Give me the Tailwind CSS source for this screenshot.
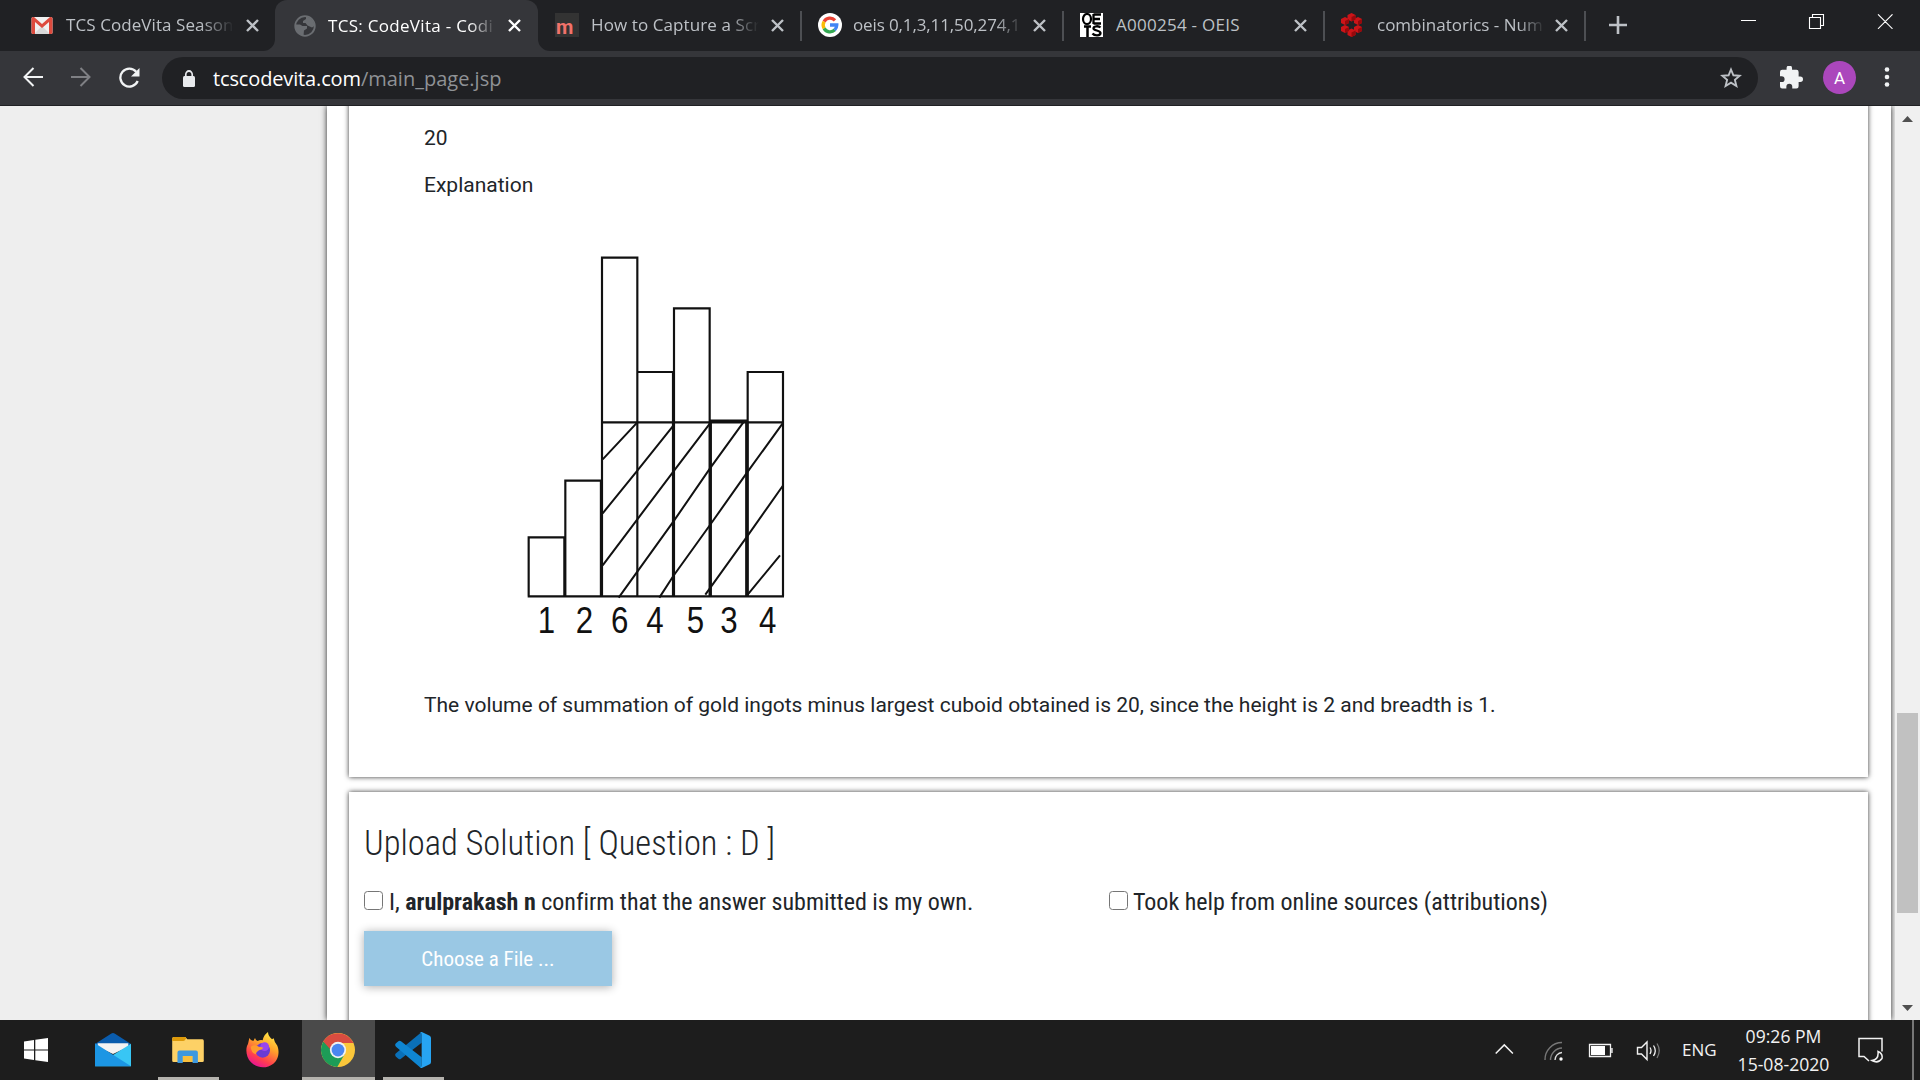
<!DOCTYPE html>
<html lang="en">
<head>
<meta charset="utf-8">
<title>TCS: CodeVita - Coding Contest</title>
<script src="https://cdn.jsdelivr.net/npm/@tailwindcss/browser@4"></script>
</head>
<body class="w-[1920px] h-[1080px] overflow-hidden flex flex-col bg-white font-['Open_Sans',sans-serif]">
<svg class="hidden">
  <symbol id="x" viewBox="0 0 13 13"><path d="M1 1l11 11M12 1L1 12" stroke="currentColor" stroke-width="2.4" fill="none"/></symbol>
</svg>

<!-- Tab strip -->
<header class="h-[51px] shrink-0 bg-[#202124] flex pl-[14px] text-[17px] text-[#bdc1c6]">
  <div class="w-[261px] h-[50px] pl-[17px] flex items-center">
    <svg class="w-6 h-6 shrink-0" viewBox="0 0 24 24"><rect x=".5" y="4" width="21" height="17" rx="1.5" fill="#f1f1f1"/><path d="M3 21l8-8 8 8z" fill="#d9d9d9"/><path d="M.5 5.500v14A1.500 1.500 0 0 0 2 21h2V9l7 6 7-6v12h2a1.500 1.500 0 0 0 1.500-1.500v-14A1.500 1.500 0 0 0 20 4h-1l-8 7-8-7H2A1.500 1.500 0 0 0 .5 5.500z" fill="#dd4b3e"/></svg>
    <div class="ml-[11px] w-[168px] shrink-0 overflow-hidden whitespace-nowrap tracking-[0.08px] mask-r-from-80% mask-r-to-100%">TCS CodeVita Season</div>
    <svg class="ml-[12px] w-[13px] h-[13px]"><use href="#x"/></svg>
  </div>
  <div class="relative w-[263px] h-[51px] pl-[19px] rounded-t-[12px] bg-[#35363a] text-white flex items-center">
    <svg class="absolute -left-3 bottom-0 w-3 h-3" viewBox="0 0 12 12"><path d="M12 0v12H0A12 12 0 0 0 12 0z" fill="#35363a"/></svg>
    <svg class="absolute -right-3 bottom-0 w-3 h-3" viewBox="0 0 12 12"><path d="M0 0v12h12A12 12 0 0 1 0 0z" fill="#35363a"/></svg>
    <svg class="w-[22px] h-[22px] shrink-0" viewBox="0 0 22 22"><circle cx="11" cy="11" r="9.800" fill="none" stroke="#6a6d71" stroke-width="1.800"/><path d="M1.500 9.500h4.500l2.500 1.500h4.500v2.500l-3 2-.5 5C5 20.500 1.500 16 1.500 11zM12 1.500c5 1 8.500 5 8.500 9.500l-2.500 1.500-4.500-2-2-2.500H9V6l3-2z" fill="#6a6d71"/></svg>
    <div class="ml-[12px] w-[168px] shrink-0 overflow-hidden whitespace-nowrap tracking-[0.3px] mask-r-from-84% mask-r-to-100%">TCS: CodeVita - Codi</div>
    <svg class="ml-[12px] w-[13px] h-[13px]"><use href="#x"/></svg>
  </div>
  <div class="w-[262px] h-[50px] pl-[17px] flex items-center">
    <div class="w-6 h-6 shrink-0 bg-[#333] text-[#f2726a] font-['Roboto'] font-bold text-[20px] leading-[28px] pl-px">m</div>
    <div class="ml-[12px] w-[168px] shrink-0 overflow-hidden whitespace-nowrap tracking-[0.1px] mask-r-from-82% mask-r-to-100%">How to Capture a Scr</div>
    <svg class="ml-[12px] w-[13px] h-[13px]"><use href="#x"/></svg>
  </div>
  <div class="relative w-[262px] h-[50px] pl-[18px] flex items-center">
    <div class="absolute left-0 top-[11px] w-[2px] h-[30px] bg-[#4d4f53]"></div>
    <svg class="w-6 h-6 shrink-0" viewBox="0 0 24 24"><circle cx="12" cy="12" r="12" fill="#fff"/><g fill="none" stroke-width="3.300"><path d="M6.100 8.600A6.800 6.800 0 0 1 17 7.300" stroke="#ea4335"/><path d="M6.100 15.400a6.800 6.800 0 0 1 0-6.800" stroke="#fbbc05"/><path d="M16.800 16.900A6.800 6.800 0 0 1 6.100 15.400" stroke="#34a853"/><path d="M12 12h6.800a6.800 6.800 0 0 1-2.200 5" stroke="#4285f4"/></g></svg>
    <div class="ml-[11px] w-[170px] shrink-0 overflow-hidden whitespace-nowrap tracking-[-0.12px] mask-r-from-84% mask-r-to-100%">oeis 0,1,3,11,50,274,1</div>
    <svg class="ml-[10px] w-[13px] h-[13px]"><use href="#x"/></svg>
  </div>
  <div class="relative w-[261px] h-[50px] pl-[18px] flex items-center">
    <div class="absolute left-0 top-[11px] w-[2px] h-[30px] bg-[#4d4f53]"></div>
    <svg class="w-[23px] h-6 shrink-0" viewBox="0 0 23 24" fill="none" stroke="#000"><path d="M0 0h23v24H0z" fill="#fff" stroke="none"/><ellipse cx="7" cy="6" rx="4" ry="5" stroke-width="2.200"/><path d="M13.500 1v10M13.500 1.500H21M13.500 6H20M13.500 10.500H21" stroke-width="2.300"/><path d="M4 13.500h7M7.500 13v11" stroke-width="2.500"/><path d="M20.500 14.500c-2-2-7-1.500-7 1s7 1.500 7 4.500-6 3-8 .5" stroke-width="2.300"/></svg>
    <div class="ml-[13px] w-[167px] shrink-0 overflow-hidden whitespace-nowrap tracking-[0.26px]">A000254 - OEIS</div>
    <svg class="ml-[11px] w-[13px] h-[13px]"><use href="#x"/></svg>
  </div>
  <div class="relative w-[260px] h-[50px] pl-[18px] flex items-center">
    <div class="absolute left-0 top-[11px] w-[2px] h-[30px] bg-[#4d4f53]"></div>
    <svg class="w-[21px] h-6 shrink-0" viewBox="0 0 21 24"><g fill="#cc1418"><path d="M10.500 0l4 2v4.500l-4 2-4-2V2z"/><path d="M4 4l4 2v4l-4 2-4-2V6z"/><path d="M17 4l4 2v4l-4 2-4-2V6z"/><path d="M4 12l4 2v4l-4 2-4-2v-4z"/><path d="M17 12l4 2v4l-4 2-4-2v-4z"/><path d="M10.500 15.500l4 2V22l-4 2-4-2v-4.500z"/></g><path d="M10.500 4l4-2v4.500l-4 2zM4 8l4-2v4l-4 2zM17 8l4-2v4l-4 2zM4 16l4-2v4l-4 2zM17 16l4-2v4l-4 2zM10.500 19.500l4-2V22l-4 2z" fill="#96090c"/></svg>
    <div class="ml-[15px] w-[168px] shrink-0 overflow-hidden whitespace-nowrap mask-r-from-84% mask-r-to-100%">combinatorics - Num</div>
    <svg class="ml-[10px] w-[13px] h-[13px]"><use href="#x"/></svg>
  </div>
  <div class="mt-[11px] ml-px w-[2px] h-[30px] bg-[#4d4f53]"></div>
  <svg class="ml-[23px] mt-[16px] w-[18px] h-[18px]" viewBox="0 0 18 18"><path d="M9 0v18M0 9h18" stroke="#bdc1c6" stroke-width="2.600"/></svg>
  <svg class="ml-auto mr-[27px] mt-[14px] w-[152px] h-[15px]" viewBox="0 0 152 15" fill="none" stroke="#fff"><path d="M0 6.500h15M68.500 3.500h11v11h-11zM71.500 3.500v-3h11v11h-3M137 .3l14.500 14.500M151.500 .3L137 14.800" stroke-width="1.100"/></svg>
</header>

<!-- Toolbar -->
<nav class="h-[55px] shrink-0 bg-[#35363a] border-b border-[#202124] flex items-center pb-[2px]">
  <svg class="ml-[23px] w-5 h-5" viewBox="0 0 20 20" fill="none" stroke="#f1f3f4" stroke-width="2"><path d="M20 10H1.500M10.500 1L1.500 10l9 9"/></svg>
  <svg class="ml-[28px] w-5 h-5" viewBox="0 0 20 20" fill="none" stroke="#7f8084" stroke-width="2"><path d="M0 10h18.500M9.500 1l9 9-9 9"/></svg>
  <svg class="ml-[28px] w-[21px] h-[21px]" viewBox="0 0 21 21"><path d="M17.200 4.700A9 9 0 1 0 18.700 14" fill="none" stroke="#f1f3f4" stroke-width="2.300"/><path d="M20.500 1v8.500H12z" fill="#f1f3f4"/></svg>
  <div class="ml-[22px] w-[1596px] h-[42px] mt-px rounded-full bg-[#202124] flex items-center text-[20px] text-[#8f9296]">
    <svg class="ml-[21px] mt-[2px] w-[12px] h-[17px]" viewBox="0 0 13 17" preserveAspectRatio="none"><rect y="6" width="13" height="11" rx="1.500" fill="#e8eaed"/><path d="M3 7V4.500a3.500 3.500 0 0 1 7 0V7" fill="none" stroke="#e8eaed" stroke-width="1.800"/></svg>
    <div class="ml-[18px] mt-[2px] whitespace-nowrap"><span class="text-white tracking-[-0.14px]">tcscodevita.com</span><span>/main_page.jsp</span></div>
    <svg class="ml-auto mr-[16px] w-[22px] h-[22px]" viewBox="0 0 22 22"><path d="M11 2.500l2.400 5.800 6.300.5-4.800 4.100 1.500 6.100L11 15.700 5.600 19l1.500-6.100L2.300 8.800l6.300-.5z" fill="none" stroke="#bdc1c6" stroke-width="1.900"/></svg>
  </div>
  <svg class="ml-[22px] w-[23px] h-[23px]" viewBox="2 1.500 21 21"><path d="M20.500 11H19V7a2 2 0 0 0-2-2h-4V3.500a2.500 2.500 0 0 0-5 0V5H4a2 2 0 0 0-2 2v3.800h1.500a2.700 2.700 0 0 1 0 5.400H2V20a2 2 0 0 0 2 2h3.800v-1.500a2.700 2.700 0 0 1 5.400 0V22H17a2 2 0 0 0 2-2v-4h1.500a2.500 2.500 0 0 0 0-5z" fill="#f1f3f4"/></svg>
  <div class="ml-[20px] w-[33px] h-[33px] rounded-full bg-[#ab47bc] text-white text-center font-['Roboto'] text-[17px] leading-[34px]">A</div>
  <svg class="ml-[28px] w-[6px] h-5" viewBox="0 0 6 20" fill="#f1f3f4"><circle cx="3" cy="2.500" r="2.300"/><circle cx="3" cy="10" r="2.300"/><circle cx="3" cy="17.500" r="2.300"/></svg>
</nav>

<!-- Page -->
<main class="h-[914px] shrink-0 flex bg-[#eee] overflow-hidden font-['Roboto',sans-serif] text-[#212529]">
  <div class="ml-[327px] w-[1564px] h-[914px] bg-white shadow-[0_0_6px_rgba(0,0,0,0.85)] flex flex-col pl-[22px]">
    <section class="-mt-5 w-[1519px] h-[691px] shrink-0 bg-white shadow-[0_0_5px_rgba(0,0,0,0.8)] pl-[75px] pt-[37px] text-[21px] leading-[30px]">
      <p>20</p>
      <p class="mt-[17px]">Explanation</p>
      <svg class="ml-[86px] mt-[40px] w-[300px] h-[410px]" viewBox="0 0 900 1230" fill="none" stroke="#111" stroke-width="6.500">
        <path d="M56 1069V892h107v177M166 1069V722h107v347M276 1069V53h106v1016M384 396h106v673M492 1069V205h107v864M602 1069V543h107v526M713 1069V396h106v673M53 1069h769M276 547h543"/>
        <path d="M274 722v347M490 396v673M601 545v524M711 545v524" stroke-width="8.500"/>
        <path d="M599 543h112" stroke-width="9"/>
        <path d="M278 658L382 547M278 820L382 692 490 557M278 976L382 838 490 695 600 550M326 1073L382 995 490 845 600 685 700 547M448 1073L490 1008 600 855 711 698 818 550M586 1064L711 890 818 738M713 1064L810 946" stroke-width="6"/>
        <g fill="#111" stroke="none" font-family="Liberation Sans, sans-serif" font-size="113" text-anchor="middle">
          <text transform="translate(109 1180) scale(.83 1)">1</text><text transform="translate(223 1180) scale(.83 1)">2</text><text transform="translate(329 1180) scale(.83 1)">6</text><text transform="translate(435 1180) scale(.83 1)">4</text><text transform="translate(556 1180) scale(.83 1)">5</text><text transform="translate(657 1180) scale(.83 1)">3</text><text transform="translate(773 1180) scale(.83 1)">4</text>
        </g>
      </svg>
      <p class="mt-[40px] whitespace-nowrap">The volume of summation of gold ingots minus largest cuboid obtained is 20, since the height is 2 and breadth is 1.</p>
    </section>
    <section class="mt-[15px] w-[1519px] h-[300px] shrink-0 bg-white shadow-[0_0_5px_rgba(0,0,0,0.8)] pl-[15px] pt-[31px] font-['Roboto_Condensed',sans-serif]">
      <h2 class="text-[34.5px] leading-[40px] font-light">Upload Solution [ Question : D ]</h2>
      <div class="mt-[24px] flex text-[24px] leading-[30px] whitespace-nowrap">
        <label class="w-[745px] flex"><span class="mt-[4px] mr-[6px] w-[19px] h-[19px] rounded-[3.500px] border-[1.500px] border-[#767676] bg-white"></span><span class="tracking-[-0.015px]">I, <b class="font-bold">arulprakash n</b> confirm that the answer submitted is my own.</span></label>
        <label class="flex"><span class="mt-[4px] mr-[5px] w-[19px] h-[19px] rounded-[3.500px] border-[1.500px] border-[#767676] bg-white"></span><span class="tracking-[-0.015px]">Took help from online sources (attributions)</span></label>
      </div>
      <button class="mt-[14px] w-[248px] h-[55px] pt-px bg-[#9ac8e4] shadow-[0_1px_9px_rgba(0,0,0,0.32)] text-white text-[21px] leading-[55px] font-[450]">Choose a File ...</button>
    </section>
  </div>
  <div class="relative z-10 ml-[4px] w-[25px] bg-[#f0f0f0] flex flex-col items-center">
    <svg class="mt-[10px] w-[11px] h-[6px]" viewBox="0 0 11 6"><path d="M5.500 0L11 6H0z" fill="#505050"/></svg>
    <div class="mt-[591px] w-[21px] h-[200px] bg-[#c1c1c1]"></div>
    <svg class="mt-[92px] w-[11px] h-[6px]" viewBox="0 0 11 6"><path d="M5.500 6L11 0H0z" fill="#505050"/></svg>
  </div>
</main>

<!-- Taskbar -->
<footer class="relative h-[60px] shrink-0 bg-[#1d1d1d] flex text-[#f2f2f2]">
  <svg class="ml-[24px] mt-[18px] w-6 h-6" viewBox="0 0 24 24" fill="#fff"><path d="M0 3.400L10 2v9.500H0zM11.300 1.800L24 0v11.500H11.300zM0 12.500h10V22L0 20.600zM11.300 12.500H24V24l-12.700-1.800z"/></svg>
  <svg class="ml-[47px] mt-[12px] w-9 h-[35px]" viewBox="0 0 108 101"><path d="M0 34L48 3q6-4 12 0l48 31v20H0z" fill="#0a5cad"/><path d="M8 32h92v10L54 64 8 42z" fill="#f3f3f3"/><path d="M0 101L108 33v68z" fill="#38c6f4"/><path d="M0 101V32l108 69z" fill="#1c96e4"/></svg>
  <div class="ml-[27px] w-[61px] flex flex-col items-center justify-between">
    <svg class="mt-[17px] mr-[2px] w-8 h-[26px]" viewBox="0 0 96 79"><path d="M0 5q0-5 5-5h35l6 7h46q4 0 4 5v60q0 4-4 4H4q-4 0-4-4z" fill="#fdd166"/><path d="M0 5q0-5 5-5h34q4 0 3 4-2 8-8 8H0z" fill="#dd9a0a"/><path d="M32 58h30v18H32z" fill="#f9bf3c"/><path d="M16 79V47q0-6 6-6h50q6 0 6 6v32H62V58H32v21z" fill="#3d98de"/></svg>
    <div class="h-[3px] w-full bg-[#b5b3ae]"></div>
  </div>
  <svg class="ml-[25px] mt-[12px] w-[36px] h-[36px]" viewBox="0 0 108 108"><defs><linearGradient id="ff" x1=".8" y1="0" x2=".3" y2="1"><stop offset="0" stop-color="#fff04a"/><stop offset=".4" stop-color="#ffa22a"/><stop offset=".75" stop-color="#ff3f4e"/><stop offset="1" stop-color="#e6109a"/></linearGradient></defs><path d="M15 18q4 8 12 9l5-9q2 7 8 9 8-4 15-2 3-16 16-25 0 12 12 22l5-3q2 12 11 22c6 14 6 40-12 54-20 16-50 14-67-4C4 74 3 48 11 36z" fill="url(#ff)" transform="translate(1 0)"/><circle cx="56" cy="55" r="22" fill="#6a3bd4"/><circle cx="62" cy="44" r="13" fill="#9a46ee"/><path d="M20 44q14-8 24 0 6 0 14 3-4 7-13 8-8 4-10 12-14-6-15-23z" fill="#ff9a2d"/></svg>
  <div class="ml-[22px] w-[73px] bg-[#4a4a4a] flex flex-col items-center justify-between">
    <svg class="mt-[13px] mr-px w-[34px] h-[34px]" viewBox="0 0 48 48"><circle cx="24" cy="24" r="24" fill="#fbc73a"/><path d="M3.200 12A24 24 0 0 0 23 48l10.500-18.500L24 24z" fill="#1d9c57"/><path d="M3.200 12A24 24 0 0 1 44.800 12.500L46 14H24L14 24z" fill="#d94c40"/><circle cx="24" cy="24" r="11.500" fill="#f1f1f1"/><circle cx="24" cy="24" r="9" fill="#4a86f0"/></svg>
    <div class="h-[3px] w-full bg-[#b5b3ae]"></div>
  </div>
  <div class="ml-[8px] w-[61px] flex flex-col items-center justify-between">
    <svg class="mt-[12px] mr-px w-9 h-9" viewBox="0 0 108 108"><path d="M80 0v32L18 80q-4 3-8 0l-7-6q-5-5 0-10z" fill="#0a70b8"/><path d="M3 44q-5-5 0-10l7-6q4-3 8 0l62 48v32q-4-1-6-3z" fill="#0f86d2"/><path d="M74 2q3-3 8-1l22 10q4 2 4 7v72q0 5-4 7l-22 10q-5 2-8-1 6 2 6-6V8q0-8-6-6z" fill="#27a4f2"/></svg>
    <div class="h-[3px] w-full bg-[#b5b3ae]"></div>
  </div>
  <svg class="ml-auto mt-[12px] w-[166px] h-9" viewBox="0 0 166 36" fill="none" stroke="#f2f2f2" stroke-width="1.500"><path d="M.7 21.500l8.600-8.600 8.600 8.600"/><g stroke="#777" stroke-width="1.400"><path d="M50 28a17 17 0 0 1 17-17.500M55.500 28A12 12 0 0 1 67 16"/><path d="M60 28a7.500 7.500 0 0 1 7-7.500" stroke="#ddd"/></g><circle cx="66" cy="27" r="1.700" fill="#fff" stroke="none"/><path d="M94.500 12.500h21v12h-21zM117 16v5" stroke-width="1.300"/><path d="M96 14h14v9H96z" fill="#fff" stroke="none"/><path d="M142.500 15.500h4l5.500-5.500v17.500l-5.500-5.500h-4z" stroke-width="1.400"/><path d="M155 15.500q2 3 0 6.500M158.500 13.500q3.500 5 0 10.500" stroke-width="1.300"/><path d="M162 11.500q4.500 7 0 14.500" stroke="#777" stroke-width="1.300"/></svg>
  <div class="ml-[21px] w-[36px] text-[17px] leading-[60px]">ENG</div>
  <div class="ml-[17px] w-[97px] pt-[2px] text-center text-[17.600px] leading-[28px] whitespace-nowrap">09:26 PM<br>15-08-2020</div>
  <svg class="ml-[26px] mt-[17px] w-[26px] h-[27px]" viewBox="0 0 26 27" fill="none" stroke="#f2f2f2" stroke-width="1.500"><path d="M11 24l-5-4.500H1V1.500h23v13"/><path d="M20 14.500q5 2 4 7-4 5.500-10 2 7-1 6-9z"/></svg>
  <div class="ml-[28px] mr-[6px] w-[2px] bg-[#777]"></div>
</footer>
</body>
</html>
